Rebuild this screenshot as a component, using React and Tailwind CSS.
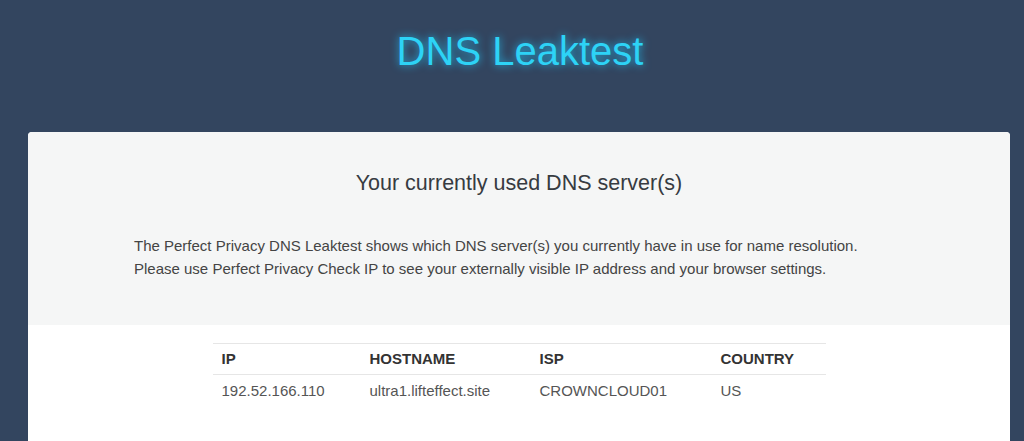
import React from "react";

const rows = [
  { ip: "192.52.166.110", host: "ultra1.lifteffect.site", isp: "CROWNCLOUD01", country: "US" },
];

const App = () => {
  return (
    <div className="min-h-[441px] bg-[#33455f] font-['Liberation_Sans',Arial,sans-serif] overflow-hidden">
      <header className="h-[132px] pt-[27px] pl-[16px] text-center">
        <h1 className="text-[40px] leading-[48px] text-[#2dd3f6] [text-shadow:0_0_8px_rgba(30,200,255,0.85)]">
          DNS Leaktest
        </h1>
      </header>

      <main className="ml-[28px] w-[982px] rounded-t-[4px] bg-white min-h-[309px]">
        <section className="bg-[#f5f6f6] rounded-t-[4px] h-[193px] pt-[37px]">
          <h2 className="text-center text-[21.5px] leading-[28px] text-[#373b41]">
            Your currently used DNS server(s)
          </h2>
          <p className="mx-auto mt-[37px] w-[772px] pl-[1px] text-[15px] leading-[23px] text-[#444]">
            The Perfect Privacy DNS Leaktest shows which DNS server(s) you currently have in use for name resolution.
            <br />
            Please use Perfect Privacy Check IP to see your externally visible IP address and your browser settings.
          </p>
        </section>

        <div className="pt-[18px]">
          <table className="mx-auto w-[613px] border-t border-[#e6e6e6] text-left text-[15px]">
            <thead>
              <tr className="border-b border-[#e6e6e6] h-[31px]">
                <th className="w-[148px] pl-[9px] font-bold text-[#333]">IP</th>
                <th className="w-[170px] pl-[9px] font-bold text-[#333]">HOSTNAME</th>
                <th className="w-[181px] pl-[9px] font-bold text-[#333]">ISP</th>
                <th className="pl-[9px] font-bold text-[#333]">COUNTRY</th>
              </tr>
            </thead>
            <tbody>
              {rows.map((r) => (
                <tr key={r.ip} className="h-[33px]">
                  <td className="pl-[9px] text-[#555]">{r.ip}</td>
                  <td className="pl-[9px] text-[#555]">{r.host}</td>
                  <td className="pl-[9px] text-[#555]">{r.isp}</td>
                  <td className="pl-[9px] text-[#555]">{r.country}</td>
                </tr>
              ))}
            </tbody>
          </table>
        </div>
      </main>
    </div>
  );
};

export default App;
